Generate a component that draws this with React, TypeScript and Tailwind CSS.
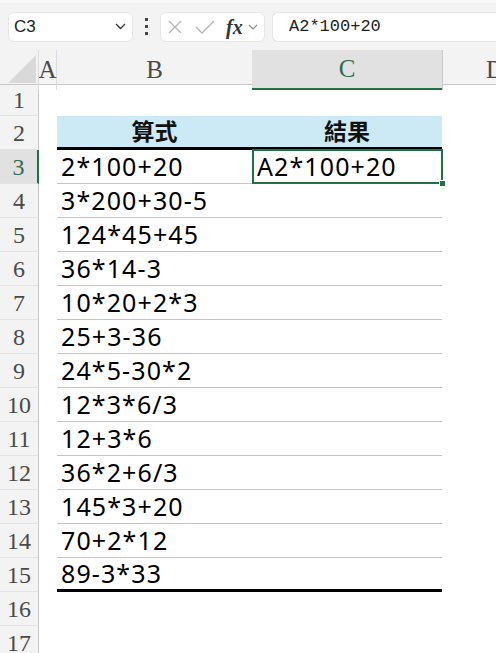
import React from 'react';

const rows: string[] = [
  '2*100+20',
  '3*200+30-5',
  '124*45+45',
  '36*14-3',
  '10*20+2*3',
  '25+3-36',
  '24*5-30*2',
  '12*3*6/3',
  '12+3*6',
  '36*2+6/3',
  '145*3+20',
  '70+2*12',
  '89-3*33',
];

const serif = { fontFamily: '"Liberation Serif", "DejaVu Serif", serif' };
const cellFont = { fontFamily: '"Noto Sans", "Noto Sans CJK TC", sans-serif' };

const RowHead: React.FC<{ n: number; active?: boolean; h: string }> = ({ n, active, h }) => (
  <div
    className={`${h} flex items-center justify-center border-b border-[#e3e3e3] text-[24px] ${
      active ? 'bg-[#e1e1e1] text-[#2f6b4c] border-r-2 border-r-[#217346]' : 'bg-[#f3f3f3] text-[#4a4a4a] border-r border-r-[#c8c8c8]'
    }`}
    style={serif}
  >
    {n}
  </div>
);

const App: React.FC = () => {
  return (
    <div className="w-[496px] h-[653px] overflow-hidden bg-white">
      {/* toolbar */}
      <div className="h-[50px] bg-[#f3f3f3] border-t-[3px] border-t-[#f8f8f8] flex items-center pl-[8px] gap-0">
        <div className="w-[125px] h-[30px] bg-white rounded-[6px] border border-[#e6e6e6] flex items-center justify-between pl-[5px] pr-[6px]">
          <span className="text-[17px] text-[#222]" style={{ fontFamily: '"Liberation Sans", sans-serif' }}>C3</span>
          <svg width="11" height="7" viewBox="0 0 11 7" fill="none" stroke="#333" strokeWidth="1.3">
            <path d="M1 1l4.5 4.5L10 1" />
          </svg>
        </div>
        <div className="w-[27px] flex flex-col items-center gap-[4px]">
          <div className="w-[3px] h-[3px] bg-[#444]" />
          <div className="w-[3px] h-[3px] bg-[#444]" />
          <div className="w-[3px] h-[3px] bg-[#444]" />
        </div>
        <div className="w-[105px] h-[30px] bg-white rounded-[6px] border border-[#e6e6e6] flex items-center pl-[6px]">
          <svg width="16" height="16" viewBox="0 0 16 16" stroke="#b5b5b5" strokeWidth="1.3" fill="none">
            <path d="M2 2l12 12M14 2L2 14" />
          </svg>
          <svg className="ml-[12px]" width="20" height="16" viewBox="0 0 20 16" stroke="#b5b5b5" strokeWidth="1.3" fill="none">
            <path d="M1 8l6 6L19 2" />
          </svg>
          <span className="ml-[11px] text-[20px] italic font-bold text-[#333] leading-none" style={serif}>fx</span>
          <svg className="ml-[5px]" width="10" height="6" viewBox="0 0 10 6" fill="none" stroke="#888" strokeWidth="1.2">
            <path d="M1 1l4 4 4-4" />
          </svg>
        </div>
        <div className="ml-[7px] flex-1 h-[30px] bg-white rounded-l-[6px] border border-r-0 border-[#e6e6e6] flex items-center pl-[16px]">
          <span className="text-[17px] text-[#222]" style={{ fontFamily: '"Liberation Mono", monospace' }}>A2*100+20</span>
        </div>
      </div>

      {/* column headers */}
      <div className="grid grid-cols-[39px_18px_195px_190px_1fr] h-[35px] bg-[#f3f3f3] border-b border-[#c8c8c8]" style={serif}>
        <div className="relative border-r border-[#dcdcdc]">
          <svg className="absolute left-[8px] top-[5px]" width="28" height="28" viewBox="0 0 28 28">
            <polygon points="0,28 28,28 28,0" fill="#d9d9d9" />
          </svg>
        </div>
        <div className="flex items-center justify-center text-[25px] text-[#4a4a4a] border-r border-[#dcdcdc]">A</div>
        <div className="flex items-center justify-center text-[25px] text-[#4a4a4a]">B</div>
        <div className="flex items-center justify-center text-[25px] text-[#2f6b4c] bg-[#e1e1e1] border-b-2 border-[#217346]">C</div>
        <div className="flex items-center pl-[43px] text-[25px] text-[#4a4a4a] border-l border-[#c8c8c8] whitespace-nowrap">D</div>
      </div>

      {/* row 1 */}
      <div className="grid grid-cols-[39px_18px_195px_190px_1fr]">
        <RowHead n={1} h="h-[31px]" />
        <div className="col-span-4" />
      </div>

      {/* row 2 header */}
      <div className="grid grid-cols-[39px_18px_195px_190px_1fr]">
        <RowHead n={2} h="h-[34px]" />
        <div />
        <div
          className="h-[34px] bg-[#cbeaf6] border-b-[3px] border-black flex items-center justify-center text-[23px] font-bold text-[#111]"
          style={cellFont}
        >
          算式
        </div>
        <div
          className="h-[34px] bg-[#cbeaf6] border-b-[3px] border-black flex items-center justify-center text-[23px] font-bold text-[#111]"
          style={cellFont}
        >
          結果
        </div>
        <div />
      </div>

      {rows.map((expr, i) => {
        const n = i + 3;
        const last = i === rows.length - 1;
        const border = last ? 'border-b-[3px] border-black' : 'border-b border-[#c4c4c4]';
        return (
          <div key={n} className="grid grid-cols-[39px_18px_195px_190px_1fr]">
            <RowHead n={n} h="h-[34px]" active={n === 3} />
            <div />
            <div className={`h-[34px] ${border} flex items-center pl-[4px] text-[25px] tracking-[1.1px] text-black`} style={cellFont}>
              {expr}
            </div>
            <div className={`relative h-[34px] ${border} flex items-center pl-[5px] text-[25px] tracking-[1.1px] text-black`} style={cellFont}>
              {n === 3 && (
                <>
                  <span>A2*100+20</span>
                  <div className="absolute left-0 -top-[1px] -right-[1px] -bottom-[1px] border-2 border-[#217346]" />
                  <div className="absolute -right-[4px] -bottom-[4px] w-[7px] h-[7px] bg-[#217346] border border-white" />
                </>
              )}
            </div>
            <div />
          </div>
        );
      })}

      {[16, 17].map((n) => (
        <div key={n} className="grid grid-cols-[39px_18px_195px_190px_1fr]">
          <RowHead n={n} h="h-[34px]" />
          <div className="col-span-4" />
        </div>
      ))}
    </div>
  );
};

export default App;
